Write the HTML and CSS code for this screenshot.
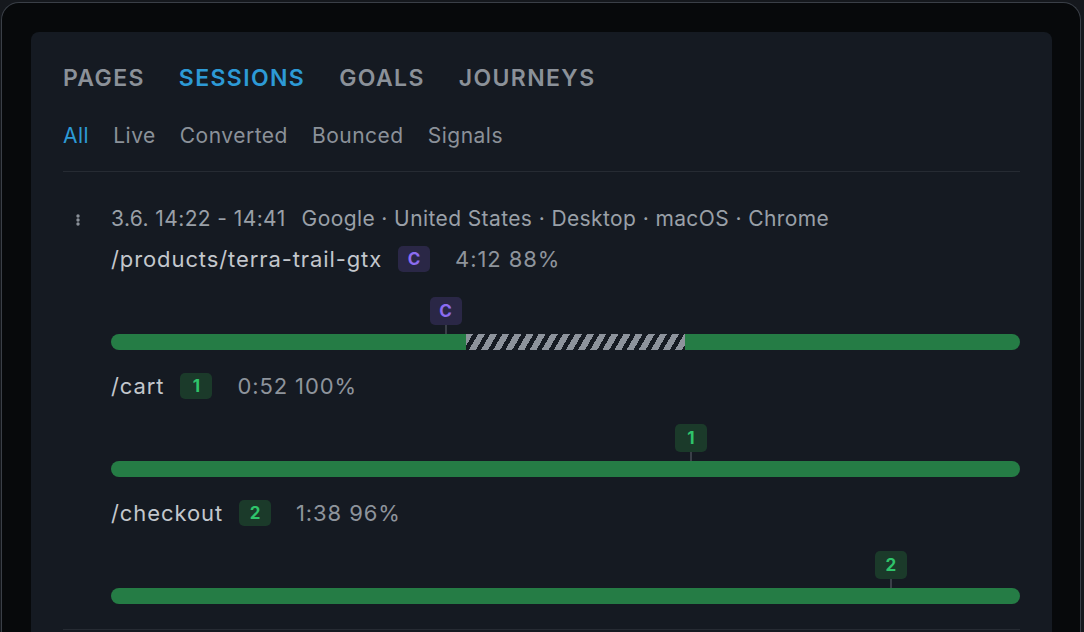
FILE: index.html
```html
<!DOCTYPE html>
<html lang="en">
<head>
    <meta charset="UTF-8">
    <meta name="viewport" content="width=device-width, initial-scale=1.0">
    <title>Sessions - Analytics</title>
    <link rel="stylesheet" href="styles.css">
</head>
<body>
    <div class="device">
        <div class="panel">
            <nav class="tabs">
                <a class="tab">PAGES</a>
                <a class="tab active">SESSIONS</a>
                <a class="tab">GOALS</a>
                <a class="tab">JOURNEYS</a>
            </nav>
            <nav class="filters">
                <a class="filter active">All</a>
                <a class="filter">Live</a>
                <a class="filter">Converted</a>
                <a class="filter">Bounced</a>
                <a class="filter">Signals</a>
            </nav>

            <div class="session">
                <div class="session-menu">
                    <svg width="6" height="14" viewBox="0 0 6 14">
                        <circle cx="3" cy="3" r="1.7" fill="#8a9099"/>
                        <circle cx="3" cy="7" r="1.7" fill="#8a9099"/>
                        <circle cx="3" cy="11" r="1.7" fill="#8a9099"/>
                    </svg>
                </div>
                <div class="session-body">
                    <div class="session-meta">
                        <span class="time">3.6. 14:22 - 14:41</span>
                        <span>Google · United States · Desktop · macOS · Chrome</span>
                    </div>

                    <div class="page">
                        <div class="page-head">
                            <span class="path">/products/terra-trail-gtx</span>
                            <span class="badge purple">C</span>
                            <span class="stats">4:12 88%</span>
                        </div>
                        <div class="track">
                            <div class="bar">
                                <div class="seg" style="width: 39.1%"></div>
                                <div class="seg idle" style="width: 24.1%"></div>
                                <div class="seg fill"></div>
                            </div>
                            <div class="marker" style="left: 36.8%"><span class="badge purple">C</span></div>
                        </div>
                    </div>

                    <div class="page">
                        <div class="page-head">
                            <span class="path">/cart</span>
                            <span class="badge green">1</span>
                            <span class="stats">0:52 100%</span>
                        </div>
                        <div class="track">
                            <div class="bar">
                                <div class="seg fill"></div>
                            </div>
                            <div class="marker" style="left: 63.8%"><span class="badge green">1</span></div>
                        </div>
                    </div>

                    <div class="page">
                        <div class="page-head">
                            <span class="path">/checkout</span>
                            <span class="badge green">2</span>
                            <span class="stats">1:38 96%</span>
                        </div>
                        <div class="track">
                            <div class="bar">
                                <div class="seg fill"></div>
                            </div>
                            <div class="marker" style="left: 85.8%"><span class="badge green">2</span></div>
                        </div>
                    </div>
                </div>
            </div>
        </div>
    </div>
</body>
</html>
```

FILE: styles.css
```css
html, body {
    height: 100%;
}
body {
    margin: 0;
    background-color: #15181d;
    font-family: Inter, "Noto Sans", Arial, sans-serif;
    overflow: hidden;
}
.device {
    box-sizing: border-box;
    height: 640px;
    margin: 2px 3px 0 1px;
    padding: 29px 28px 0 29px;
    background: #07090b;
    border: 1px solid #3a3f47;
    border-bottom: none;
    border-radius: 18px 18px 0 0;
}
.panel {
    height: 100%;
    padding: 32px 32px 0;
    background: #151a22;
    border-radius: 8px 8px 0 0;
}
.tabs {
    display: flex;
    gap: 34px;
}
.tab {
    font-size: 23px;
    line-height: 28px;
    font-weight: 600;
    letter-spacing: 0.06em;
    color: #8b9199;
}
.tab.active {
    color: #2d9ad6;
}
.filters {
    display: flex;
    gap: 24px;
    margin-top: 30px;
    padding-bottom: 21px;
    border-bottom: 1px solid #262b33;
}
.filter {
    font-size: 21px;
    line-height: 28px;
    letter-spacing: 0.5px;
    color: #8b9199;
}
.filter.active {
    color: #2d9ad6;
}
.session {
    display: flex;
    padding-top: 33px;
    padding-bottom: 25px;
    border-bottom: 1px solid #262b33;
}
.session-menu {
    width: 48px;
    flex: none;
    padding: 6px 0 0 12px;
    box-sizing: border-box;
}
.session-body {
    flex: 1;
}
.session-meta {
    display: flex;
    gap: 16px;
    font-size: 21px;
    line-height: 28px;
    letter-spacing: 0.4px;
    color: #9aa0a8;
}
.page {
    margin-top: 12px;
}
.page + .page {
    margin-top: 22px;
}
.page-head {
    display: flex;
    align-items: center;
    height: 28px;
}
.path {
    font-size: 22px;
    letter-spacing: 0.9px;
    color: #c3c7cd;
}
.stats {
    margin-left: 25px;
    font-size: 22px;
    letter-spacing: 0.9px;
    color: #8e949c;
}
.badge {
    display: inline-flex;
    align-items: center;
    justify-content: center;
    width: 32px;
    height: 26px;
    border-radius: 5px;
    font-size: 17px;
    font-weight: 700;
    margin-left: 16px;
}
.badge.purple {
    background: #2a2746;
    color: #8c6cf0;
}
.badge.green {
    background: #1b3a2a;
    color: #2fc46b;
}
.track {
    position: relative;
    margin-top: 61px;
}
.bar {
    display: flex;
    height: 16px;
    border-radius: 8px;
    overflow: hidden;
}
.seg {
    height: 100%;
    background: #257c45;
}
.seg.fill {
    flex: 1;
}
.seg.idle {
    background: repeating-linear-gradient(120deg, #8d939c 0, #8d939c 6px, #151a22 6px, #151a22 10.5px);
}
.marker {
    position: absolute;
    bottom: 16px;
    transform: translateX(-50%);
    display: flex;
    flex-direction: column;
    align-items: center;
}
.marker::after {
    content: "";
    width: 2px;
    height: 9px;
    background: #3a3f48;
}
.marker .badge {
    margin-left: 0;
    height: 28px;
}
```
